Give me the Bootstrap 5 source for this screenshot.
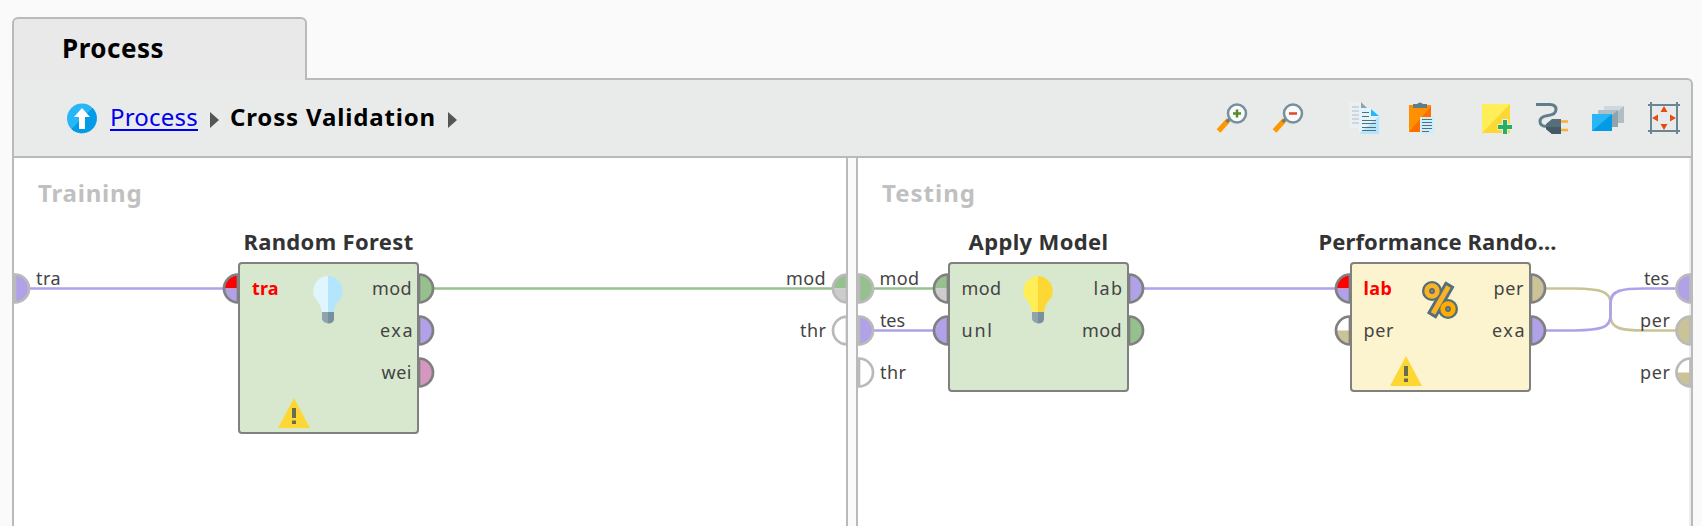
<!DOCTYPE html>
<html lang="en">
<head>
<meta charset="utf-8">
<meta name="viewport" content="width=device-width, initial-scale=1">
<title>Process</title>
<link rel="stylesheet" href="https://cdn.jsdelivr.net/npm/bootstrap@5.3.0/dist/css/bootstrap.min.css">
<style>
  body { background: #fafafa; font-family: "Noto Sans", sans-serif; color: #000; height: 526px; padding: 17px 9px 0 12px; }
  .tab-handle { width: 295px; height: 63px; background: #e9e9e9; border: 2px solid #bababa; border-bottom: 0; border-radius: 6px 6px 0 0; padding: 0 0 2px 48px; font-size: 26px; letter-spacing: .5px; margin-bottom: -2px; z-index: 1; }
  .process-panel { border: 2px solid #bababa; border-bottom: 0; border-radius: 0 6px 0 0; background: #e9ebea; height: 448px; }
  .process-bar { height: 78px; border-bottom: 2px solid #bababa; padding: 0 11px 0 53px; }
  .crumbs { font-size: 24px; line-height: 34px; }
  .crumbs a { color: #0000ee; text-decoration: none; border-bottom: 2px solid #0000ee; line-height: 23px; height: 26px; letter-spacing: .2px; margin-top: -1px; }
  .crumbs strong { letter-spacing: .85px; margin: -2px 0 0 -1px; }
  .crumb-up { margin-right: 13px; }
  .crumb-arrow { margin: 4px 12px 0; }
  .tool-icon { width: 32px; height: 32px; margin-right: 24px; }
  .tool-last { margin-right: 44px; }
  .pane { background: #fff; height: 368px; }
  .pane-left { width: 834px; border-right: 2px solid #bababa; }
  .pane-right { border-left: 2px solid #bababa; box-shadow: inset -2px 0 #eee; }
  .pane-gap { width: 8px; background: #fafafa; }
  .pane-title { color: #c0c0c0; font-size: 24px; line-height: 32px; padding: 19px 0 0 24px; letter-spacing: .8px; }
  .pane-right .pane-title { letter-spacing: 1px; }
  .op { position: absolute; width: 181px; border: 2px solid #808080; border-radius: 4px; top: 103.500px; }
  .op-model { background: #d8e8ce; }
  .op-perf { background: #fcf4ce; }
  .op-title { position: absolute; top: -38px; left: 50%; transform: translateX(-50%); white-space: nowrap; color: #333; font-size: 22px; line-height: 30px; letter-spacing: .35px; }
  .op-perf .op-title { letter-spacing: .1px; margin-left: -3px; }
  .flow { position: absolute; left: 0; top: 0; width: 100%; height: 100%; }
  .flow text { font-size: 18px; fill: #444; }
  .flow .req { fill: #f00; font-weight: 700; }
</style>
</head>
<body class="d-flex flex-column overflow-hidden">
<div class="tab-handle d-flex align-items-center fw-bold position-relative flex-shrink-0">Process</div>
<main class="process-panel flex-shrink-0">
  <div class="process-bar d-flex align-items-center justify-content-between">
    <nav class="crumbs d-flex align-items-center">
      <svg class="crumb-up" width="30" height="31" viewBox="0 0 30 31" aria-hidden="true"><circle cx="15" cy="15.500" r="15" fill="#29b6f6"/><path d="M25.600 4.900A15 15 0 0 1 4.400 26.100z" fill="#039be5"/><path d="M15 5l8 9h-5v12h-6V14H7z" fill="#fff"/></svg>
      <a href="#">Process</a>
      <svg class="crumb-arrow" width="9" height="16"><path d="M0 0L9 8 0 16z" fill="#555"/></svg>
      <strong>Cross Validation</strong>
      <svg class="crumb-arrow" width="9" height="16"><path d="M0 0L9 8 0 16z" fill="#555"/></svg>
    </nav>
    <div class="d-flex align-items-center" role="toolbar">
      <svg class="tool-icon" viewBox="0 0 32 32"><path d="M2.500 29L12.500 18" stroke="#ff9800" stroke-width="5"/><path d="M10.500 20l4-4" stroke="#607d8b" stroke-width="3"/><circle cx="21" cy="11.500" r="9" fill="#fafafa" stroke="#78909c" stroke-width="2.500"/><path d="M17 11.500h8M21 7.500v8" stroke="#558b2f" stroke-width="2.500"/></svg>
      <svg class="tool-icon tool-last" viewBox="0 0 32 32"><path d="M2.500 29L12.500 18" stroke="#ff9800" stroke-width="5"/><path d="M10.500 20l4-4" stroke="#607d8b" stroke-width="3"/><circle cx="21" cy="11.500" r="9" fill="#fafafa" stroke="#78909c" stroke-width="2.500"/><path d="M17 11.500h8" stroke="#dd4b23" stroke-width="2.500"/></svg>
      <svg class="tool-icon" viewBox="0 0 32 32"><path d="M1 0h12l6 6v20H1z" fill="#eceff1"/><path d="M13 0l6 6h-6z" fill="#90a4ae"/><path d="M4 5h7M4 9h7M4 13h7M4 17h7M4 21h7" stroke="#b0bec5"/><path d="M11 6h12l8 8v18H11z" fill="#e1f5fe"/><path d="M31 14v18H11z" fill="#b3e5fc"/><path d="M23 7l8 7h-8z" fill="#29b6f6"/><path d="M14 10.500h7M14 14.500h7M14 18.500h14M14 21.500h14M14 25.500h14M14 28.500h14" stroke="#546e7a"/></svg>
      <svg class="tool-icon tool-last" viewBox="0 0 32 32"><path d="M5 3h22v27H5z" fill="#ff9100"/><path d="M27 4v26H5z" fill="#ff6d00"/><path d="M9 2h4q3-3 6 0h4v4H9z" fill="#607d8b"/><path d="M16 15h14v17H16z" fill="#cdeefc"/><path d="M18 17.500h10M18 20.500h10M18 23.500h10M18 26.500h10M18 29.500h7" stroke="#546e7a"/></svg>
      <svg class="tool-icon" viewBox="0 0 32 32"><path d="M2 2h28v29H2z" fill="#ffee58"/><path d="M30 2v29H2z" fill="#fdd835"/><path d="M25 17v15M17.500 25H32" stroke="#e9ebea" stroke-width="6"/><path d="M25 18v14M18 25h14" stroke="#27ae60" stroke-width="4"/></svg>
      <svg class="tool-icon" viewBox="0 0 32 32"><path d="M0 2.500h14q6 0 6 5t-8 6t-8 6q0 5 7 5" fill="none" stroke="#607d8b" stroke-width="3"/><path d="M25 19.500h7M25 28h7" stroke="#fbb034" stroke-width="2.500"/><path d="M10 22l6-5h9v15h-9l-6-5z" fill="#546e7a"/><path d="M10 25h15v7h-9l-6-5z" fill="#455a64"/></svg>
      <svg class="tool-icon" viewBox="0 0 32 32"><path d="M12 4h20v17H12z" fill="#b0bec5"/><path d="M12 4h20L20 15h-8z" fill="#cfd8dc"/><path d="M6 8h20v17H6z" fill="#90a4ae"/><path d="M6 8h20l-9 8H6z" fill="#b0bec5"/><path d="M0 12h20v17H0z" fill="#039be5"/><path d="M0 12h20L0 29z" fill="#29b6f6"/></svg>
      <svg class="tool-icon me-0" viewBox="0 0 32 32"><path d="M0 3h32M0 29h32M3 0v32M29 0v32" stroke="#6b8592" stroke-width="2"/><path d="M16 4l3.500 6h-7zM16 28l3.500-6h-7zM4 16l6-3.500v7zM28 16l-6-3.500v7z" fill="#e64a19"/></svg>
    </div>
  </div>

  <div class="d-flex">
    <section class="pane pane-left position-relative overflow-hidden flex-shrink-0">
      <div class="pane-title fw-bold">Training</div>
      <div class="op op-model" style="left:224px;height:172px"><div class="op-title fw-bold">Random Forest</div></div>
      <svg class="flow" viewBox="14 158 832 368" preserveAspectRatio="xMinYMin slice">
        <defs>
          <g id="warning"><path d="M16 0L32 30H0z" fill="#fdd835"/><path d="M16 10v10M16 22.500v3.500" stroke="#686d50" stroke-width="4"/></g>
          <g id="bulb-base"><path d="M9 36h6v11.500q-6-1.500-6-5z" fill="#90a4ae"/><path d="M15 36h6v6.500q0 5-6 5z" fill="#78909c"/></g>
          <path id="half-r" d="M0-14A14 14 0 0 1 0 14z" stroke-width="2.700"/>
          <path id="half-l" d="M0-14A14 14 0 0 0 0 14z" stroke-width="2.700"/>
          <path id="quad-top" d="M0-14A14 14 0 0 0-14 0H0z"/>
          <path id="quad-low" d="M0 14A14 14 0 0 1-14 0H0z"/>
        </defs>
        <path d="M28 288.500H224" stroke="#b0a1e8" stroke-width="2.700"/>
        <path d="M433 288.500H832" stroke="#97c08f" stroke-width="2.700"/>
        <use href="#half-r" x="15" y="288.500" fill="#b0a1e8" stroke="#bababa"/>
        <use href="#quad-top" x="238" y="288.500" fill="#f00"/><use href="#quad-low" x="238" y="288.500" fill="#b0a1e8"/><use href="#half-l" x="238" y="288.500" fill="none" stroke="#808080"/>
        <use href="#half-r" x="419" y="288.500" fill="#97c08f" stroke="#808080"/>
        <use href="#half-r" x="419" y="330.500" fill="#b0a1e8" stroke="#808080"/>
        <use href="#half-r" x="419" y="372.500" fill="#d497bf" stroke="#808080"/>
        <use href="#quad-top" x="847" y="288.500" fill="#97c08f"/><use href="#quad-low" x="847" y="288.500" fill="#ccc"/><use href="#half-l" x="847" y="288.500" fill="none" stroke="#bababa"/>
        <use href="#half-l" x="847" y="330.500" fill="#fff" stroke="#bababa"/>
        <text x="36" y="284.500" textLength="24.500">tra</text>
        <text class="req" x="252" y="294.500" textLength="26.500">tra</text>
        <text x="372" y="294.500" textLength="39.500">mod</text>
        <text x="380" y="336.500" textLength="32.500">exa</text>
        <text x="381.500" y="378.500" textLength="30">wei</text>
        <text x="786" y="284.500" textLength="39.500">mod</text>
        <text x="800" y="336.500" textLength="26">thr</text>
        <g transform="translate(313 276)"><path d="M15 0A15 15 0 0 0 2 22Q8 28 9 36h6z" fill="#e1f5fe"/><path d="M15 0a15 15 0 0 1 13 22Q22 28 21 36h-6z" fill="#b3e5fc"/><use href="#bulb-base"/></g>
        <use href="#warning" x="278" y="398"/>
      </svg>
    </section>
    <div class="pane-gap flex-shrink-0"></div>
    <section class="pane pane-right position-relative overflow-hidden flex-grow-1">
      <div class="pane-title fw-bold">Testing</div>
      <div class="op op-model" style="left:90px;height:130px"><div class="op-title fw-bold">Apply Model</div></div>
      <div class="op op-perf" style="left:492px;height:130px"><div class="op-title fw-bold">Performance Rando...</div></div>
      <svg class="flow" viewBox="858 158 833 368" preserveAspectRatio="xMinYMin slice">
        <g fill="none" stroke-width="2.700">
          <path d="M872 288.500H935" stroke="#97c08f"/>
          <path d="M872 330.500H935M1143 288.500H1337" stroke="#b0a1e8"/>
          <path d="M1545 288.500H1575C1600 289 1610.500 291 1610.500 303V316C1610.500 329 1622 330.500 1645 330.500H1676" stroke="#cac397"/>
          <path d="M1545 330.500H1575C1600 330 1610.500 328 1610.500 316V303C1610.500 290 1622 288.500 1645 288.500H1676" stroke="#b0a1e8"/>
        </g>
        <use href="#half-r" x="859" y="288.500" fill="#97c08f" stroke="#bababa"/>
        <use href="#half-r" x="859" y="330.500" fill="#b0a1e8" stroke="#bababa"/>
        <use href="#half-r" x="859" y="372.500" fill="#fff" stroke="#bababa"/>
        <use href="#quad-top" x="948" y="288.500" fill="#97c08f"/><use href="#quad-low" x="948" y="288.500" fill="#ccc"/><use href="#half-l" x="948" y="288.500" fill="none" stroke="#808080"/>
        <use href="#half-l" x="948" y="330.500" fill="#b0a1e8" stroke="#808080"/>
        <use href="#half-r" x="1129" y="288.500" fill="#b0a1e8" stroke="#808080"/>
        <use href="#half-r" x="1129" y="330.500" fill="#97c08f" stroke="#808080"/>
        <use href="#quad-top" x="1350" y="288.500" fill="#f00"/><use href="#quad-low" x="1350" y="288.500" fill="#b0a1e8"/><use href="#half-l" x="1350" y="288.500" fill="none" stroke="#808080"/>
        <use href="#quad-top" x="1350" y="330.500" fill="#fff"/><use href="#quad-low" x="1350" y="330.500" fill="#cac397"/><use href="#half-l" x="1350" y="330.500" fill="none" stroke="#808080"/>
        <use href="#half-r" x="1531" y="288.500" fill="#cac397" stroke="#808080"/>
        <use href="#half-r" x="1531" y="330.500" fill="#b0a1e8" stroke="#808080"/>
        <use href="#half-l" x="1690.500" y="288.500" fill="#b0a1e8" stroke="#bababa"/>
        <use href="#half-l" x="1690.500" y="330.500" fill="#cac397" stroke="#bababa"/>
        <use href="#quad-top" x="1690.500" y="372.500" fill="#fff"/><use href="#quad-low" x="1690.500" y="372.500" fill="#cac397"/><use href="#half-l" x="1690.500" y="372.500" fill="none" stroke="#bababa"/>
        <text x="879.500" y="284.500" textLength="39.500">mod</text>
        <text x="880" y="326.500" textLength="25">tes</text>
        <text x="880" y="378.500" textLength="26">thr</text>
        <text x="961.500" y="294.500" textLength="39.500">mod</text>
        <text x="961.500" y="336.500" textLength="30.500">unl</text>
        <text x="1093.500" y="294.500" textLength="28.500">lab</text>
        <text x="1082" y="336.500" textLength="39.500">mod</text>
        <text class="req" x="1363.500" y="294.500" textLength="28.500">lab</text>
        <text x="1363.500" y="336.500" textLength="30">per</text>
        <text x="1493.500" y="294.500" textLength="30">per</text>
        <text x="1492" y="336.500" textLength="32.500">exa</text>
        <text x="1644" y="284.500" textLength="25">tes</text>
        <text x="1640" y="326.500" textLength="30">per</text>
        <text x="1640" y="378.500" textLength="30">per</text>
        <g transform="translate(1023 276)"><path d="M15 0A15 15 0 0 0 2 22Q8 28 9 36h6z" fill="#ffee58"/><path d="M15 0a15 15 0 0 1 13 22Q22 28 21 36h-6z" fill="#fdd835"/><use href="#bulb-base"/></g>
        <g transform="translate(1422 280)" fill="none"><g stroke="#546e7a"><circle cx="10" cy="11" r="5.300" stroke-width="9.500"/><circle cx="26" cy="29" r="5.300" stroke-width="9.500"/><path d="M28 4L9.500 36" stroke-width="10.500"/></g><path d="M26.500 6.500L11 33.500" stroke="#fbb324" stroke-width="5"/><circle cx="10" cy="11" r="5.300" stroke="#fbb324" stroke-width="4.800"/><circle cx="26" cy="29" r="5.300" stroke="#ffab00" stroke-width="4.800"/></g>
        <use href="#warning" x="1390" y="356"/>
      </svg>
    </section>
  </div>
</main>
<script src="https://cdn.jsdelivr.net/npm/bootstrap@5.3.0/dist/js/bootstrap.bundle.min.js"></script>
</body>
</html>
